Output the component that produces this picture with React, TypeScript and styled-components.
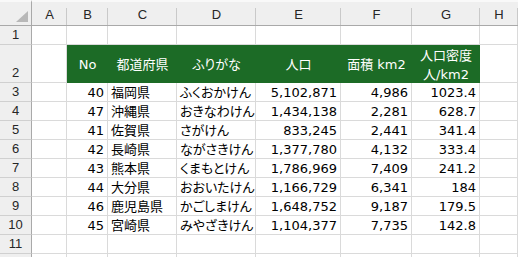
import { Fragment } from "react";
import styled, { createGlobalStyle } from "styled-components";

const GlobalStyle = createGlobalStyle`
  html, body {
    margin: 0;
    padding: 0;
    background: #ffffff;
    overflow: hidden;
  }
`;

const COLS = ["A", "B", "C", "D", "E", "F", "G", "H"];

interface IPref {
  no: number;
  name: string;
  kana: string;
  pop: string;
  area: string;
  density: string;
}

const prefs: IPref[] = [
  { no: 40, name: "福岡県", kana: "ふくおかけん", pop: "5,102,871", area: "4,986", density: "1023.4" },
  { no: 47, name: "沖縄県", kana: "おきなわけん", pop: "1,434,138", area: "2,281", density: "628.7" },
  { no: 41, name: "佐賀県", kana: "さがけん", pop: "833,245", area: "2,441", density: "341.4" },
  { no: 42, name: "長崎県", kana: "ながさきけん", pop: "1,377,780", area: "4,132", density: "333.4" },
  { no: 43, name: "熊本県", kana: "くまもとけん", pop: "1,786,969", area: "7,409", density: "241.2" },
  { no: 44, name: "大分県", kana: "おおいたけん", pop: "1,166,729", area: "6,341", density: "184" },
  { no: 46, name: "鹿児島県", kana: "かごしまけん", pop: "1,648,752", area: "9,187", density: "179.5" },
  { no: 45, name: "宮崎県", kana: "みやざきけん", pop: "1,104,377", area: "7,735", density: "142.8" },
];

const Sheet = styled.div`
  display: grid;
  grid-template-columns: 32px 35px 41px 69px 79px 85px 71px 68px 38px;
  grid-template-rows: 26px 19px 38px repeat(10, 19px);
  width: 518px;
  height: 257px;
  overflow: hidden;
  font-family: "DejaVu Sans", "Noto Sans CJK JP", sans-serif;
  font-size: 13px;
  font-feature-settings: "palt";
  color: #000;
`;

const Corner = styled.div`
  box-sizing: border-box;
  background: #efefef;
  border-top: 2px solid #f9f9f9;
  border-right: 1px solid #a9a9a9;
  border-bottom: 1px solid #a9a9a9;
  display: flex;
  align-items: flex-end;
  justify-content: flex-end;
  padding: 0 3px 3px 0;
`;

const ColHead = styled.div`
  box-sizing: border-box;
  border-top: 2px solid #f9f9f9;
  border-bottom: 1px solid #a9a9a9;
  background: linear-gradient(#c9c9c9, #c9c9c9) no-repeat right bottom / 1px 17px,
    #efefef;
  display: flex;
  align-items: center;
  justify-content: center;
  font-family: "Liberation Sans", "Noto Sans", sans-serif;
  font-size: 13px;
  color: #262626;
  padding-top: 1px;
`;

const RowHead = styled.div`
  box-sizing: border-box;
  background: #efefef;
  border-right: 1px solid #a9a9a9;
  border-bottom: 1px solid #d0d0d0;
  display: flex;
  align-items: flex-end;
  justify-content: center;
  font-family: "Liberation Sans", "Noto Sans", sans-serif;
  font-size: 13px;
  line-height: 16px;
  color: #262626;
  padding-bottom: 1px;
`;

const Cell = styled.div<{ $right?: boolean }>`
  box-sizing: border-box;
  border-right: 1px solid #dadada;
  border-bottom: 1px solid #dadada;
  display: flex;
  align-items: flex-end;
  justify-content: ${(p) => (p.$right ? "flex-end" : "flex-start")};
  padding: 0 3px;
  line-height: 16px;
  white-space: nowrap;
  overflow: hidden;
`;

const HeadCell = styled.div`
  box-sizing: border-box;
  background: #1c6b26;
  color: #ffffff;
  display: flex;
  align-items: center;
  justify-content: center;
  text-align: center;
  line-height: 19px;
  white-space: nowrap;
  padding-top: 1px;
`;

const Triangle = () => (
  <svg width="12" height="11" viewBox="0 0 12 11">
    <polygon points="12,0 12,11 0,11" fill="#b8b8b8" />
  </svg>
);

const App = () => {
  const blank = (n: number, key: string) =>
    Array.from({ length: n }, (_, i) => <Cell key={`${key}-${i}`} />);

  return (
    <>
      <GlobalStyle />
      <Sheet>
        <Corner>
          <Triangle />
        </Corner>
        {COLS.map((c) => (
          <ColHead key={c}>{c}</ColHead>
        ))}

        <RowHead>1</RowHead>
        {blank(8, "r1")}

        <RowHead>2</RowHead>
        <Cell />
        <HeadCell>No</HeadCell>
        <HeadCell>都道府県</HeadCell>
        <HeadCell>ふりがな</HeadCell>
        <HeadCell>人口</HeadCell>
        <HeadCell>面積 km2</HeadCell>
        <HeadCell>
          人口密度
          <br />
          人/km2
        </HeadCell>
        <Cell />

        {prefs.map((p, i) => (
          <Fragment key={p.no}>
            <RowHead>{i + 3}</RowHead>
            <Cell />
            <Cell $right>{p.no}</Cell>
            <Cell>{p.name}</Cell>
            <Cell>{p.kana}</Cell>
            <Cell $right>{p.pop}</Cell>
            <Cell $right>{p.area}</Cell>
            <Cell $right>{p.density}</Cell>
            <Cell />
          </Fragment>
        ))}

        <RowHead>11</RowHead>
        {blank(8, "r11")}
        <RowHead />
        {blank(8, "r12")}
      </Sheet>
    </>
  );
};

export default App;
